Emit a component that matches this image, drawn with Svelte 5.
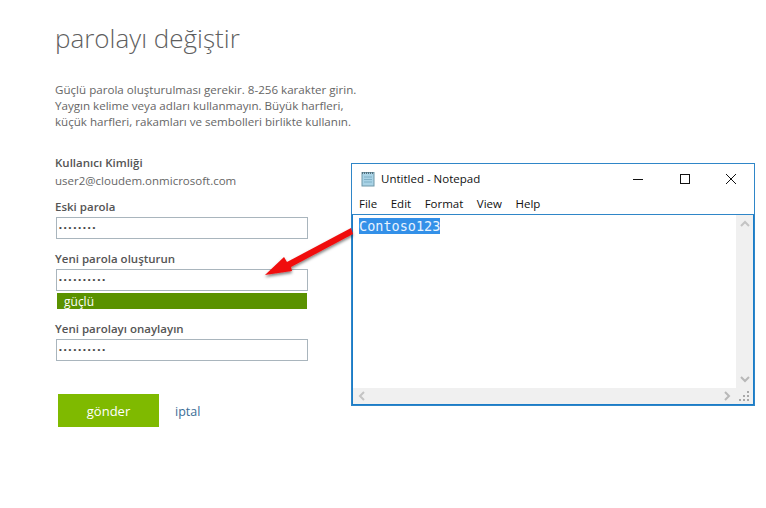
<script>
  const fields = [
    { label: 'Eski parola', dots: 8 },
    { label: 'Yeni parola oluşturun', dots: 10, strength: 'güçlü' },
    { label: 'Yeni parolayı onaylayın', dots: 10 }
  ];
  const menu = ['File', 'Edit', 'Format', 'View', 'Help'];
</script>

<div class="page">
  <h1>parolayı değiştir</h1>
  <p class="intro">
    Güçlü parola oluşturulması gerekir. 8-256 karakter girin.<br />
    Yaygın kelime veya adları kullanmayın. Büyük harfleri,<br />
    küçük harfleri, rakamları ve sembolleri birlikte kullanın.
  </p>

  <div class="user">
    <div class="label">Kullanıcı Kimliği</div>
    <div class="email">user2@cloudem.onmicrosoft.com</div>
  </div>

  {#each fields as field}
    <div class="field">
      <div class="label">{field.label}</div>
      <div class="input">{'•'.repeat(field.dots)}</div>
      {#if field.strength}
        <div class="strength">{field.strength}</div>
      {/if}
    </div>
  {/each}

  <div class="actions">
    <button class="submit">gönder</button>
    <span class="cancel">iptal</span>
  </div>

  <div class="notepad">
    <div class="titlebar">
      <svg class="app-icon" width="16" height="16" viewBox="0 0 16 16">
        <rect x="2" y="1.500" width="12" height="13.500" fill="#a9d3e6" stroke="#6f97a8" />
        <path d="M2 2h12" stroke="#55707c" stroke-width="2" stroke-dasharray="1 1" />
        <path d="M4 6h8M4 8.500h8M4 11h8" stroke="#7fb0c6" />
      </svg>
      <span class="title">Untitled - Notepad</span>
      <div class="controls">
        <svg width="14" height="14" viewBox="0 0 14 14"><path d="M1 7.500h10" stroke="#111" /></svg>
        <svg width="14" height="14" viewBox="0 0 14 14"><rect x="2.500" y="2.500" width="9" height="9" fill="none" stroke="#111" /></svg>
        <svg width="14" height="14" viewBox="0 0 14 14"><path d="M2 2l10 10M12 2L2 12" stroke="#111" /></svg>
      </div>
    </div>
    <div class="menu">
      {#each menu as item}
        <span>{item}</span>
      {/each}
    </div>
    <div class="client">
      <div class="editor">
        <div class="text-area">
          <span class="selected">Contoso123</span>
        </div>
        <div class="vscroll">
          <svg width="10" height="8" viewBox="0 0 10 8"><path d="M1 6l4-4 4 4" fill="none" stroke="#c4c4c4" stroke-width="2" /></svg>
          <svg width="10" height="8" viewBox="0 0 10 8"><path d="M1 2l4 4 4-4" fill="none" stroke="#b8b8b8" stroke-width="2" /></svg>
        </div>
      </div>
      <div class="bottom">
        <div class="hscroll">
          <svg width="8" height="10" viewBox="0 0 8 10"><path d="M6 1L2 5l4 4" fill="none" stroke="#c4c4c4" stroke-width="2" /></svg>
          <svg width="8" height="10" viewBox="0 0 8 10"><path d="M2 1l4 4-4 4" fill="none" stroke="#b8b8b8" stroke-width="2" /></svg>
        </div>
        <svg class="grip" width="17" height="16" viewBox="0 0 17 16" fill="#a8a8a8">
          <rect x="11" y="3" width="2" height="2" />
          <rect x="7" y="7" width="2" height="2" /><rect x="11" y="7" width="2" height="2" />
          <rect x="3" y="11" width="2" height="2" /><rect x="7" y="11" width="2" height="2" /><rect x="11" y="11" width="2" height="2" />
        </svg>
      </div>
    </div>
  </div>

  <svg class="arrow" width="100" height="56" viewBox="0 0 100 56">
    <defs>
      <filter id="arrow-shadow" x="-20%" y="-20%" width="140%" height="160%">
        <feDropShadow dx="0" dy="2" stdDeviation="1.600" flood-color="#000" flood-opacity="0.5" />
      </filter>
    </defs>
    <path
      d="M91 3L93 9L31 42L32 46L5 50L24 32L27 37Z"
      fill="#f01010"
      filter="url(#arrow-shadow)"
    />
  </svg>
</div>

<style>
  :global(body) {
    margin: 0;
    background: #fff;
  }

  .page {
    position: relative;
    width: 766px;
    height: 508px;
    box-sizing: border-box;
    padding: 20px 0 0 55px;
    overflow: hidden;
    font-family: 'Open Sans', 'Noto Sans', sans-serif;
    font-size: 11.500px;
    color: #5b5b5b;
  }

  h1 {
    margin: 0;
    font-size: 26px;
    line-height: 36px;
    font-weight: 300;
    color: #5f5f5f;
  }

  .intro {
    margin: 26px 0 0;
    font-size: 11.600px;
    line-height: 16px;
    color: #666;
  }

  .user {
    margin-top: 25px;
  }

  .label {
    font-weight: 600;
    line-height: 16px;
    color: #555;
  }

  .email {
    margin-top: 2px;
    line-height: 16px;
    color: #666;
  }

  .field {
    margin-top: 10px;
    padding-bottom: 2px;
  }

  .input {
    box-sizing: border-box;
    width: 252px;
    height: 22px;
    margin: 2px 0 0 1px;
    padding-left: 2px;
    border: 1px solid #a9b5bd;
    font-family: 'Liberation Sans', sans-serif;
    font-size: 8px;
    line-height: 20px;
    letter-spacing: 2px;
    color: #444;
  }

  .strength {
    box-sizing: border-box;
    width: 250px;
    height: 16px;
    margin: 2px 0 0 2px;
    padding-left: 7px;
    background: #5a9200;
    color: #fff;
    font-size: 12px;
    line-height: 17px;
  }

  .actions {
    display: flex;
    align-items: center;
    gap: 16px;
    margin: 31px 0 0 3px;
  }

  .submit {
    width: 101px;
    height: 33px;
    padding: 0;
    border: 0;
    background: #7fba00;
    color: #fff;
    font-family: inherit;
    font-size: 13px;
  }

  .cancel {
    padding-top: 2px;
    font-size: 12.500px;
    color: #3a6d96;
  }

  .notepad {
    position: absolute;
    left: 351px;
    top: 163px;
    display: flex;
    flex-direction: column;
    box-sizing: border-box;
    width: 404px;
    height: 243px;
    border: 1px solid #2f86c8;
    background: #fff;
    font-family: 'Open Sans', 'Noto Sans', sans-serif;
    color: #111;
  }

  .titlebar {
    display: flex;
    align-items: center;
    height: 29px;
    padding-left: 8px;
  }

  .title {
    margin-left: 5px;
    font-size: 11.500px;
  }

  .controls {
    display: flex;
    gap: 32px;
    margin-left: auto;
    margin-right: 16px;
  }

  .controls svg {
    display: block;
  }

  .menu {
    display: flex;
    gap: 13.500px;
    height: 21px;
    padding-left: 7px;
    border-bottom: 1px solid #2f86c8;
    font-size: 11.500px;
    line-height: 22px;
  }

  .client {
    display: flex;
    flex: 1;
    flex-direction: column;
    min-height: 0;
    border: solid #1a7cc8;
    border-width: 0 1px 1px;
  }

  .editor {
    display: flex;
    flex: 1;
    min-height: 0;
  }

  .text-area {
    flex: 1;
    padding: 3px 0 0 6px;
    font-family: 'DejaVu Sans Mono', 'Liberation Mono', monospace;
    font-size: 13.500px;
    line-height: 17px;
  }

  .selected {
    background: #3390e8;
    color: #e8f3ff;
  }

  .vscroll {
    display: flex;
    flex-direction: column;
    align-items: center;
    justify-content: space-between;
    box-sizing: border-box;
    width: 17px;
    padding: 5px 0;
    background: #f0f0f0;
  }

  .bottom {
    display: flex;
    height: 16px;
  }

  .hscroll {
    display: flex;
    flex: 1;
    align-items: center;
    justify-content: space-between;
    padding: 0 5px;
    background: #f0f0f0;
  }

  .grip {
    flex: none;
    background: #f0f0f0;
  }

  .arrow {
    position: absolute;
    left: 260px;
    top: 225px;
    overflow: visible;
  }
</style>
